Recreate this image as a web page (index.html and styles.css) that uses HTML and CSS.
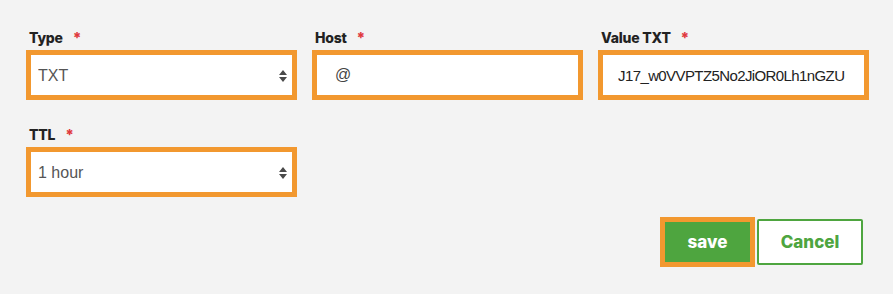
FILE: index.html
```html
<!DOCTYPE html>
<html lang="en">
<head>
  <meta charset="UTF-8">
  <title>DNS Record</title>
  <link rel="stylesheet" href="styles.css">
</head>
<body>

<div class="record-form">
  <div class="fields">
    <div class="field">
      <label class="field-label">Type <span class="req">*</span></label>
      <div class="select-wrap">
        <select class="control">
          <option>TXT</option>
        </select>
        <svg class="arrows" width="8" height="12" viewBox="0 0 8 12"><path d="M4 0 L8 5 L0 5 Z M4 12 L8 7 L0 7 Z" fill="#4a4a4a"/></svg>
      </div>
    </div>
    <div class="field">
      <label class="field-label">Host <span class="req">*</span></label>
      <input class="control host" type="text" value="@">
    </div>
    <div class="field">
      <label class="field-label">Value TXT <span class="req">*</span></label>
      <input class="control value" type="text" value="J17_w0VVPTZ5No2JiOR0Lh1nGZU">
    </div>
    <div class="field">
      <label class="field-label">TTL <span class="req">*</span></label>
      <div class="select-wrap">
        <select class="control">
          <option>1 hour</option>
        </select>
        <svg class="arrows" width="8" height="12" viewBox="0 0 8 12"><path d="M4 0 L8 5 L0 5 Z M4 12 L8 7 L0 7 Z" fill="#4a4a4a"/></svg>
      </div>
    </div>
  </div>

  <div class="actions">
    <button class="btn btn-save">save</button>
    <button class="btn btn-cancel">Cancel</button>
  </div>
</div>

</body>
</html>
```

FILE: styles.css
```css
body {
  margin: 0;
  background-color: #f3f3f3;
  font-family: 'Liberation Sans', Arial, sans-serif;
}
.record-form {
  padding: 29px 30px 0 26px;
}
.fields {
  display: grid;
  grid-template-columns: 271px 271px 271px;
  column-gap: 15px;
  row-gap: 26px;
}
.field-label {
  display: block;
  height: 17px;
  line-height: 17px;
  margin-bottom: 4px;
  padding-left: 3px;
  font-family: 'Inter', sans-serif;
  font-weight: 800;
  font-size: 14px;
  color: #222;
  letter-spacing: -0.2px;
}
.req {
  color: #e0393e;
  margin-left: 7px;
  font-size: 15px;
}
.control {
  box-sizing: border-box;
  width: 100%;
  height: 50px;
  margin: 0;
  border: 5px solid #f2982f;
  background: #fff;
  font-family: 'Liberation Sans', Arial, sans-serif;
  font-size: 16px;
  color: #555;
  padding: 0 7px;
  outline: none;
  border-radius: 0;
}
select.control {
  -webkit-appearance: none;
  appearance: none;
}
.select-wrap {
  position: relative;
}
.arrows {
  position: absolute;
  right: 10px;
  top: 20px;
}
.host {
  padding-left: 18px;
  color: #444;
}
.value {
  padding-left: 15px;
  font-size: 15px;
  letter-spacing: -0.6px;
  color: #222;
}
.actions {
  display: flex;
  justify-content: flex-end;
  align-items: center;
  gap: 2px;
  margin-top: 20px;
}
.btn {
  box-sizing: border-box;
  font-family: 'Inter', sans-serif;
  font-weight: 800;
  font-size: 17px;
  cursor: pointer;
  border-radius: 2px;
}
.btn-save {
  width: 95px;
  height: 50px;
  background-color: #4ea53f;
  color: #fff;
  border: 5px solid #f2982f;
  border-radius: 0;
}
.btn-cancel {
  width: 106px;
  height: 46px;
  background: #fff;
  color: #4ea53f;
  border: 2px solid #4ea53f;
}
```
